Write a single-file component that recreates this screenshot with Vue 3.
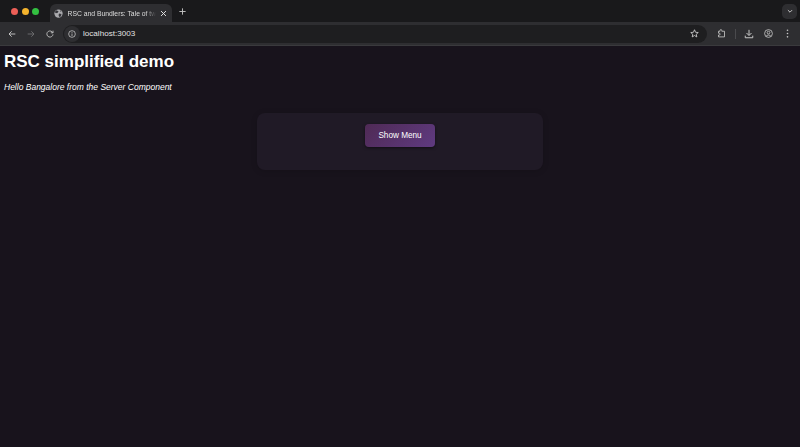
<script setup>
</script>

<template>
  <div class="window">
    <div class="tabstrip">
      <div class="lights">
        <span class="light red"></span>
        <span class="light yellow"></span>
        <span class="light green"></span>
      </div>
      <div class="tab">
        <svg class="globe" viewBox="0 0 12 12" width="9" height="9">
          <circle cx="6" cy="6" r="5.5" fill="#a9a9ad" />
          <path d="M3 1.5 L6 3 L5 5 L2.5 5.5 L1 4 Z M7 6 L10 6.5 L9 10 L7 10.5 L6 8 Z M8 1.5 L10 3 L8.5 3.5 Z" fill="#35353a" />
        </svg>
        <span class="tab-title">RSC and Bundlers: Tale of two</span>
        <svg class="tab-close" viewBox="0 0 10 10" width="7" height="7">
          <path d="M1.5 1.5 L8.5 8.5 M8.5 1.5 L1.5 8.5" stroke="#e3e3e3" stroke-width="1.4" fill="none" />
        </svg>
      </div>
      <svg class="newtab" viewBox="0 0 10 10" width="7" height="7">
        <path d="M5 0.5 V9.5 M0.5 5 H9.5" stroke="#c7c7c7" stroke-width="1.3" fill="none" />
      </svg>
      <div class="spacer"></div>
      <div class="tabsearch">
        <svg viewBox="0 0 10 10" width="6" height="6">
          <path d="M1.5 3.5 L5 7 L8.5 3.5" stroke="#d5d5d5" stroke-width="1.5" fill="none" />
        </svg>
      </div>
    </div>
    <div class="toolbar">
      <svg class="nav" viewBox="0 0 12 12" width="8" height="8">
        <path d="M11 6 H1.5 M5.5 2 L1.5 6 L5.5 10" stroke="#c7c7c7" stroke-width="1.4" fill="none" />
      </svg>
      <svg class="nav" viewBox="0 0 12 12" width="8" height="8">
        <path d="M1 6 H10.5 M6.5 2 L10.5 6 L6.5 10" stroke="#6e6e70" stroke-width="1.4" fill="none" />
      </svg>
      <svg class="nav" viewBox="0 0 12 12" width="8" height="8">
        <path d="M10.5 6.5 A4.6 4.6 0 1 1 9.2 2.8 L10.5 4.2 M10.5 1 V4.2 H7.3" stroke="#c7c7c7" stroke-width="1.3" fill="none" />
      </svg>
      <div class="omnibox">
        <span class="info-chip">
          <svg viewBox="0 0 12 12" width="8" height="8">
            <circle cx="6" cy="6" r="5" stroke="#d0d0d0" stroke-width="1.1" fill="none" />
            <path d="M6 5.2 V9 M6 3 V4.2" stroke="#d0d0d0" stroke-width="1.1" fill="none" />
          </svg>
        </span>
        <span class="url">localhost:3003</span>
        <div class="spacer"></div>
        <svg class="star" viewBox="0 0 12 12" width="9" height="9">
          <path d="M6 1 L7.4 4.4 L11 4.7 L8.3 7 L9.1 10.6 L6 8.7 L2.9 10.6 L3.7 7 L1 4.7 L4.6 4.4 Z" stroke="#d5d5d5" stroke-width="1.1" fill="none" />
        </svg>
      </div>
      <svg class="tool ext" viewBox="0 0 12 12" width="9" height="9">
        <path d="M2 3 H4 V2 A1.2 1.2 0 0 1 6.4 2 V3 H10 V10.5 H2 V8 H3 A1.2 1.2 0 0 0 3 5.6 H2 Z" stroke="#c7c7c7" stroke-width="1.1" fill="none" />
      </svg>
      <span class="divider"></span>
      <svg class="tool dl" viewBox="0 0 12 12" width="10" height="10">
        <path d="M6 1 V7.5 M3 4.8 L6 7.8 L9 4.8 M1.5 8 V10.5 H10.5 V8" stroke="#c7c7c7" stroke-width="1.2" fill="none" />
      </svg>
      <svg class="tool prof" viewBox="0 0 12 12" width="9" height="9">
        <circle cx="6" cy="6" r="5.2" stroke="#c7c7c7" stroke-width="1.1" fill="none" />
        <circle cx="6" cy="4.8" r="1.8" stroke="#c7c7c7" stroke-width="1.1" fill="none" />
        <path d="M2.8 9.6 C4 7.6 8 7.6 9.2 9.6" stroke="#c7c7c7" stroke-width="1.1" fill="none" />
      </svg>
      <svg class="tool more" viewBox="0 0 4 12" width="3" height="9">
        <circle cx="2" cy="1.6" r="1.1" fill="#c7c7c7" />
        <circle cx="2" cy="6" r="1.1" fill="#c7c7c7" />
        <circle cx="2" cy="10.4" r="1.1" fill="#c7c7c7" />
      </svg>
    </div>
    <main class="page">
      <h1 class="title">RSC simplified demo</h1>
      <p class="hello">Hello Bangalore from the Server Component</p>
      <section class="card">
        <button class="menu-btn">Show Menu</button>
      </section>
    </main>
  </div>
</template>

<style>
html, body { margin: 0; background: #18131c; }
</style>

<style scoped>
.window {
  width: 800px;
  height: 447px;
  display: flex;
  flex-direction: column;
  overflow: hidden;
  font-family: "Liberation Sans", Arial, sans-serif;
  background: #18131c;
}
.tabstrip {
  height: 22px;
  flex: none;
  display: flex;
  align-items: flex-end;
  background: #19191b;
  box-sizing: border-box;
}
.lights {
  display: flex;
  gap: 3.5px;
  align-self: center;
  margin-left: 11px;
  width: 39px;
  flex: none;
}
.light { width: 7px; height: 7px; border-radius: 50%; }
.red { background: #ec5f57; }
.yellow { background: #f4b32d; }
.green { background: #33c041; }
.tab {
  width: 122px;
  height: 18px;
  box-sizing: border-box;
  padding: 0 5px 0 4px;
  display: flex;
  align-items: center;
  background: #2e2e31;
  border-radius: 6px 6px 0 0;
  flex: none;
}
.globe { flex: none; margin-right: 4.5px; }
.tab-title {
  flex: 1;
  min-width: 0;
  overflow: hidden;
  white-space: nowrap;
  font-size: 6.8px;
  color: #dcdcdc;
  -webkit-mask-image: linear-gradient(90deg, #000 88%, transparent 100%);
  mask-image: linear-gradient(90deg, #000 88%, transparent 100%);
}
.tab-close { flex: none; margin-left: 4px; }
.newtab { align-self: center; margin-left: 7px; flex: none; }
.spacer { flex: 1; }
.tabsearch {
  align-self: center;
  width: 15px;
  height: 15px;
  margin-right: 3px;
  border-radius: 5px;
  background: #2e2e31;
  display: flex;
  align-items: center;
  justify-content: center;
}
.toolbar {
  height: 24px;
  flex: none;
  display: flex;
  align-items: center;
  background: #2e2e31;
  border-bottom: 1px solid #3a3a3d;
  box-sizing: border-box;
  padding-left: 8px;
}
.nav { flex: none; margin-right: 11px; }
.omnibox {
  width: 644px;
  height: 18px;
  margin-left: -2px;
  box-sizing: border-box;
  padding: 0 8px 0 1px;
  border-radius: 9px;
  background: #1e1e20;
  display: flex;
  align-items: center;
  flex: none;
}
.info-chip {
  width: 16px;
  height: 16px;
  border-radius: 50%;
  background: #2e2e31;
  display: flex;
  align-items: center;
  justify-content: center;
}
.url { font-size: 8.1px; color: #e3e3e3; margin-left: 3px; }
.tool { flex: none; }
.ext { margin-left: 9.5px; }
.divider { width: 1px; height: 10px; background: #4a4a4d; margin: 0 8.5px 0 9px; flex: none; }
.prof { margin-left: 9.5px; }
.more { margin-left: 13px; }
.page {
  flex: 1;
  color: #fff;
  display: flex;
  flex-direction: column;
  padding: 5px 4px 0;
}
.title {
  margin: 0;
  font-size: 17px;
  line-height: 22px;
  font-weight: 700;
}
.hello {
  margin: 9px 0 0;
  font-size: 8.5px;
  line-height: 11px;
  font-style: italic;
}
.card {
  align-self: center;
  margin-top: 20px;
  width: 286px;
  height: 57px;
  box-sizing: border-box;
  padding-top: 11px;
  border-radius: 8px;
  background: #201a26;
  display: flex;
  justify-content: center;
  align-items: flex-start;
  box-shadow: 0 1px 6px rgba(0, 0, 0, 0.15);
}
.menu-btn {
  width: 70px;
  height: 23px;
  padding: 0;
  border: 0;
  border-radius: 4px;
  color: #fff;
  font: 8.2px "Liberation Sans", Arial, sans-serif;
  background: linear-gradient(135deg, #4f2a55, #5f3a80);
  box-shadow: 0 1px 3px rgba(0, 0, 0, 0.5);
}
</style>
